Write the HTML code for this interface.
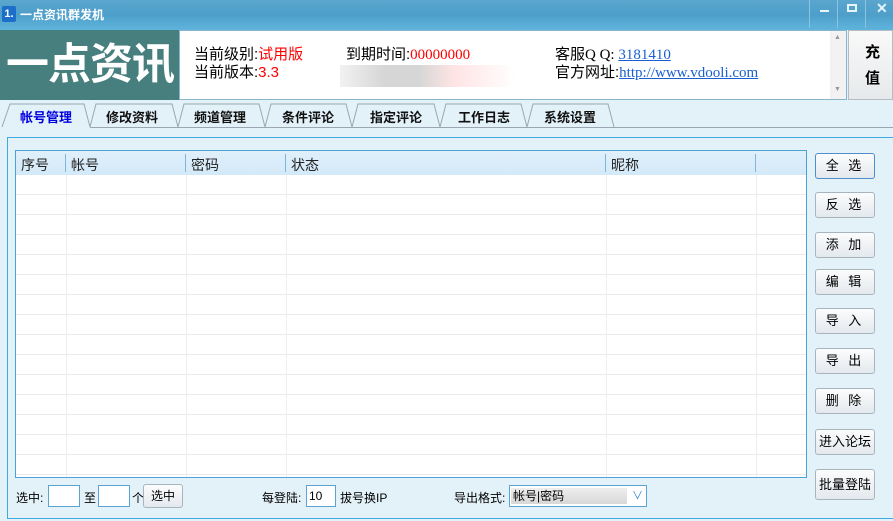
<!DOCTYPE html>
<html><head><meta charset="utf-8"><style>
*{margin:0;padding:0;box-sizing:border-box}
body{width:893px;height:521px;overflow:hidden;background:#e3f1f9;font-family:"Liberation Sans","Noto Sans CJK SC",sans-serif;font-size:12px;position:relative}
.a{position:absolute}
.title{left:0;top:0;width:893px;height:30px;background:linear-gradient(#5aa6cf,#4d9fca 50%,#5fb4dc)}
.btn{position:absolute;left:815px;width:60px;height:26px;border:1px solid #a9b4bd;border-radius:3px;background:linear-gradient(#fbfcfd,#e4e9ee);text-align:center;line-height:24px;font-size:13px;color:#000;letter-spacing:3px}
.tab{position:absolute;top:107px;font-weight:bold;font-size:13px;color:#111}
.hd{position:absolute;top:155px;font-size:14px;color:#222}
</style></head><body>
<div class="a title"></div>
<div class="a" style="left:2px;top:6px;width:14px;height:16px;background:#1b6fc8;border-radius:2px;color:#fff;font-weight:bold;font-size:11px;line-height:16px;text-align:center">1.</div>
<div class="a" style="left:20px;top:6px;color:#fff;font-weight:bold;font-size:12px">一点资讯群发机</div>
<div class="a" style="left:809px;top:0;width:1px;height:28px;background:#8cc3e0"></div>
<div class="a" style="left:837px;top:0;width:1px;height:28px;background:#8cc3e0"></div>
<div class="a" style="left:865px;top:0;width:1px;height:28px;background:#8cc3e0"></div>
<div class="a" style="left:820px;top:10px;width:9px;height:2px;background:#e8f3fa"></div>
<div class="a" style="left:847px;top:4px;width:10px;height:8px;border:2px solid #e8f3fa;border-top-width:2px"></div>
<div class="a" style="left:876px;top:0px;color:#e8f3fa;font-size:14px;font-weight:bold">✕</div>
<div class="a" style="left:0;top:30px;width:179px;height:70px;background:#467f7d"></div>
<div class="a" style="left:6px;top:38px;color:#fff;font-weight:bold;font-size:43px;line-height:54px;letter-spacing:-1px">一点资讯</div>
<div class="a" style="left:179px;top:30px;width:668px;height:70px;background:#fff;border:1px solid #8ab3cc"></div>
<div class="a" style="left:830px;top:31px;width:16px;height:68px;background:#f2f2f2"></div>
<div class="a" style="left:834px;top:34px;font-size:7px;color:#999">▲</div>
<div class="a" style="left:834px;top:86px;font-size:7px;color:#999">▼</div>
<div class="a" style="left:848px;top:30px;width:45px;height:70px;background:linear-gradient(#f9f9f9,#e6e9eb);border:1px solid #b5bcc2"></div>
<div class="a" style="left:865px;top:40px;font-weight:bold;font-size:15px;line-height:26px">充<br>值</div>
<div class="a" style="left:194px;top:46px;font-size:15px;line-height:18px">当前级别:<span style="color:#f00">试用版</span><br>当前版本:<span style="color:#f00">3.3</span></div>
<div class="a" style="left:346px;top:46px;font-size:15px;line-height:18px">到期时间:<span style="color:#f00;font-family:'Liberation Serif'">00000000</span></div>
<div class="a" style="left:340px;top:65px;width:175px;height:22px;background:linear-gradient(90deg,#eee,#ccc 25%,#ccc 45%,#fdd 65%,#fff0f0 85%,#fff);border-radius:0 12px 12px 0;opacity:.8"></div>
<div class="a" style="left:555px;top:46px;font-size:15px;line-height:18px">客服<span style="font-family:'Liberation Serif'">Q Q: <u style="color:#1a5fd0">3181410</u></span><br>官方网址:<u style="color:#1a5fd0;font-family:'Liberation Serif'">http://www.vdooli.com</u></div>
<svg class="a" style="left:0;top:100px" width="893" height="30">
<path d="M2 27 L10 4 L84 4 L90 27 M90 27 L96 4 L172 4 L178 27 M178 27 L184 4 L259 4 L265 27 M265 27 L271 4 L346 4 L352 27 M352 27 L358 4 L434 4 L440 27 M440 27 L446 4 L521 4 L527 27 M527 27 L533 4 L608 4 L614 27" fill="none" stroke="#9aa7b0"/>
<line x1="90" y1="27.5" x2="893" y2="27.5" stroke="#9aa7b0"/>
</svg>
<div class="tab" style="left:20px;color:#0000e0">帐号管理</div>
<div class="tab" style="left:106px">修改资料</div>
<div class="tab" style="left:194px">频道管理</div>
<div class="tab" style="left:282px">条件评论</div>
<div class="tab" style="left:370px">指定评论</div>
<div class="tab" style="left:458px">工作日志</div>
<div class="tab" style="left:544px">系统设置</div>
<div class="a" style="left:7px;top:137px;width:890px;height:382px;border:1px solid #3eaadf"></div>
<div class="a" style="left:15px;top:150px;width:792px;height:328px;background:#fff;border:1px solid #4aa3d6;
background-image:repeating-linear-gradient(#fff 0 19px,#ebebeb 19px 20px);background-position:0 24px;background-repeat:repeat-y"></div>
<div class="a" style="left:16px;top:151px;width:790px;height:24px;background:linear-gradient(#e1f0fb,#d3e9f8)"></div>
<div class="a" style="left:66px;top:175px;width:1px;height:302px;background:#eee"></div>
<div class="a" style="left:186px;top:175px;width:1px;height:302px;background:#eee"></div>
<div class="a" style="left:286px;top:175px;width:1px;height:302px;background:#eee"></div>
<div class="a" style="left:606px;top:175px;width:1px;height:302px;background:#eee"></div>
<div class="a" style="left:756px;top:175px;width:1px;height:302px;background:#eee"></div>
<div class="a" style="left:65px;top:154px;width:1px;height:18px;background:#7fb6dc"></div>
<div class="a" style="left:185px;top:154px;width:1px;height:18px;background:#7fb6dc"></div>
<div class="a" style="left:285px;top:154px;width:1px;height:18px;background:#7fb6dc"></div>
<div class="a" style="left:605px;top:154px;width:1px;height:18px;background:#7fb6dc"></div>
<div class="a" style="left:755px;top:154px;width:1px;height:18px;background:#7fb6dc"></div>
<div class="hd" style="left:21px">序号</div>
<div class="hd" style="left:71px">帐号</div>
<div class="hd" style="left:191px">密码</div>
<div class="hd" style="left:291px">状态</div>
<div class="hd" style="left:611px">昵称</div>
<div class="btn" style="top:153px;border-color:#4f8ecb">全 选</div>
<div class="btn" style="top:192px">反 选</div>
<div class="btn" style="top:232px">添 加</div>
<div class="btn" style="top:269px">编 辑</div>
<div class="btn" style="top:308px">导 入</div>
<div class="btn" style="top:348px">导 出</div>
<div class="btn" style="top:388px">删 除</div>
<div class="btn" style="top:429px;letter-spacing:0">进入论坛</div>
<div class="btn" style="top:469px;height:31px;line-height:29px;letter-spacing:0">批量登陆</div>
<div class="a" style="left:16px;top:489px">选中:</div>
<div class="a" style="left:48px;top:485px;width:32px;height:22px;background:#fff;border:1px solid #5aa3d6"></div>
<div class="a" style="left:84px;top:489px">至</div>
<div class="a" style="left:98px;top:485px;width:32px;height:22px;background:#fff;border:1px solid #5aa3d6"></div>
<div class="a" style="left:132px;top:489px">个</div>
<div class="a" style="left:143px;top:484px;width:40px;height:24px;border:1px solid #a9b4bd;border-radius:3px;background:linear-gradient(#fbfcfd,#e4e9ee);text-align:center;line-height:22px">选中</div>
<div class="a" style="left:262px;top:489px">每登陆:</div>
<div class="a" style="left:306px;top:485px;width:30px;height:22px;background:#fff;border:1px solid #5aa3d6;padding-left:2px;line-height:20px">10</div>
<div class="a" style="left:340px;top:489px">拔号换IP</div>
<div class="a" style="left:454px;top:489px">导出格式:</div>
<div class="a" style="left:509px;top:485px;width:138px;height:22px;background:#fff;border:1px solid #5aa3d6"></div>
<div class="a" style="left:511px;top:488px;width:116px;height:16px;background:linear-gradient(#eee,#d8d8d8);padding-left:2px;line-height:16px">帐号|密码</div>
<div class="a" style="left:632px;top:487px;color:#3a7fd0;font-size:11px">∨</div>
</body></html>
